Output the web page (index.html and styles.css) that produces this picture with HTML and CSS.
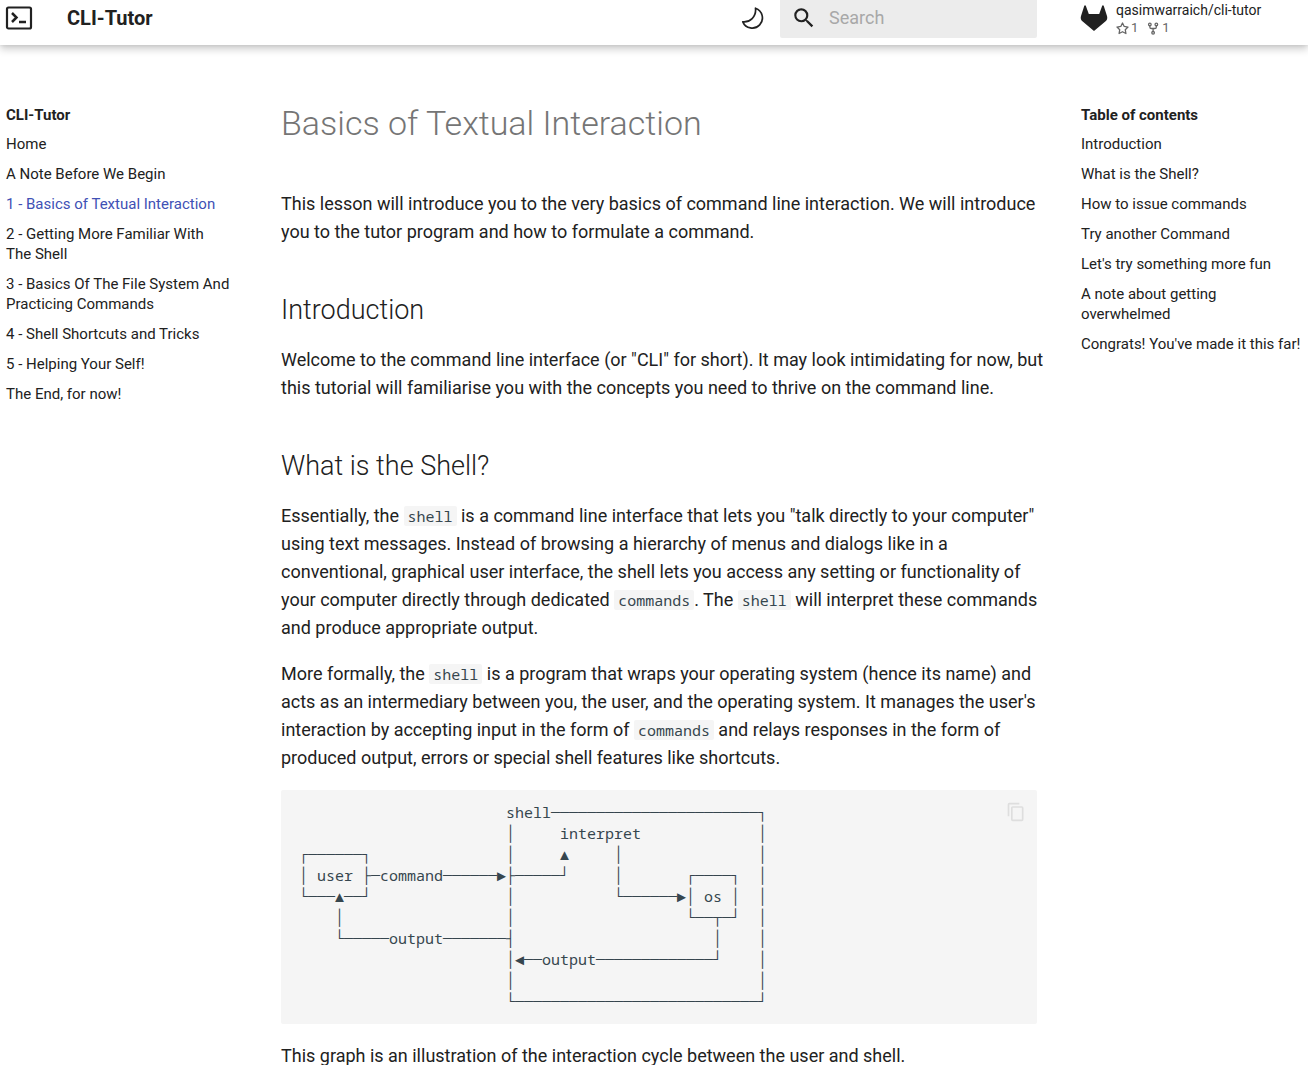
FILE: index.html
```html
<!DOCTYPE html>
<html lang="en">
<head>
<meta charset="utf-8">
<meta name="viewport" content="width=device-width, initial-scale=1">
<title>Basics of Textual Interaction - CLI-Tutor</title>
<link rel="stylesheet" href="styles.css">
</head>
<body>
<header class="header">
  <a class="logo" href="#" aria-label="CLI-Tutor home">
    <svg viewBox="0 0 28 26" width="28" height="26" fill="none" stroke="currentColor" stroke-width="2.200"><rect x="2" y="2.500" width="24" height="21" rx="1.500"/><path stroke-width="2.500" d="M7 8l4.500 4.500L7 17M14 17h7"/></svg>
  </a>
  <a class="site-title" href="#">CLI-Tutor</a>
  <button class="theme-toggle" type="button" aria-label="Switch theme">
    <svg viewBox="0 0 26 26" width="26" height="26" fill="none" stroke="currentColor" stroke-width="1.700" stroke-linejoin="round"><path d="M15.500 3.200A10.200 10.200 0 1 1 2.800 16.800C9.800 17.500 16.500 12 15.500 3.200z"/></svg>
  </button>
  <form class="search">
    <svg viewBox="0 0 24 24" width="26" height="26" fill="currentColor"><path d="M9.500 3A6.500 6.500 0 0 1 16 9.500c0 1.610-.59 3.090-1.560 4.230l.27.27h.79l5 5-1.500 1.500-5-5v-.79l-.27-.27A6.516 6.516 0 0 1 9.500 16 6.500 6.500 0 0 1 3 9.500 6.500 6.500 0 0 1 9.500 3m0 2C7 5 5 7 5 9.500S7 14 9.500 14 14 12 14 9.500 12 5 9.500 5z"/></svg>
    <input class="search-input" type="text" aria-label="Search" placeholder="Search">
  </form>
  <a class="repo" href="#">
    <svg class="repo-icon" viewBox="0 0 28 28" width="28" height="28" fill="currentColor"><path d="M5.800 1.800L8.800 10h10.400L22.200 1.800c.3-.8 1.200-.8 1.500 0L27 12c.6 2 .2 4-1.400 5.300L14 27 2.400 17.300C.8 16 .4 14 1 12L4.300 1.800c.3-.8 1.200-.8 1.500 0z"/></svg>
    <span class="repo-text">
      <span class="repo-name">qasimwarraich/cli-tutor</span>
      <span class="repo-facts">
        <span class="fact"><svg viewBox="0 0 16 16" width="13" height="13" fill="none" stroke="currentColor" stroke-width="1.600" stroke-linejoin="round"><path d="M8 1.200l2.100 4.300 4.700.7-3.400 3.300.8 4.700L8 12l-4.200 2.200.8-4.700L1.200 6.200l4.700-.7z"/></svg>1</span>
        <span class="fact"><svg viewBox="0 0 16 16" width="13" height="13" fill="none" stroke="currentColor" stroke-width="1.600"><circle cx="3.500" cy="3" r="1.600"/><circle cx="11.500" cy="3" r="1.600"/><circle cx="7.500" cy="13.300" r="1.600"/><path d="M3.500 4.600V6q0 2 2 2h4q2 0 2-2V4.600M7.500 8v3.700"/></svg>1</span>
      </span>
    </span>
  </a>
</header>
<div class="layout">
  <nav class="nav" aria-label="Lessons">
    <a class="nav-title" href="#">CLI-Tutor</a>
    <ul class="nav-list">
      <li><a href="#">Home</a></li>
      <li><a href="#">A Note Before We Begin</a></li>
      <li><a class="active" href="#">1 - Basics of Textual Interaction</a></li>
      <li><a href="#">2 - Getting More Familiar With The Shell</a></li>
      <li><a href="#">3 - Basics Of The File System And Practicing Commands</a></li>
      <li><a href="#">4 - Shell Shortcuts and Tricks</a></li>
      <li><a href="#">5 - Helping Your Self!</a></li>
      <li><a href="#">The End, for now!</a></li>
    </ul>
  </nav>
  <main class="content">
    <h1>Basics of Textual Interaction</h1>
    <p>This lesson will introduce you to the very basics of command line interaction. We will introduce you to the tutor program and how to formulate a command.</p>
    <h2 id="introduction">Introduction</h2>
    <p>Welcome to the command line interface (or "CLI" for short). It may look intimidating for now, but this tutorial will familiarise you with the concepts you need to thrive on the command line.</p>
    <h2 id="shell">What is the Shell?</h2>
    <p>Essentially, the <code>shell</code> is a command line interface that lets you "talk directly to your computer" using text messages. Instead of browsing a hierarchy of menus and dialogs like in a conventional, graphical user interface, the shell lets you access any setting or functionality of your computer directly through dedicated <code>commands</code>. The <code>shell</code> will interpret these commands and produce appropriate output.</p>
    <p>More formally, the <code>shell</code> is a program that wraps your operating system (hence its name) and acts as an intermediary between you, the user, and the operating system. It manages the user's interaction by accepting input in the form of <code>commands</code> and relays responses in the form of produced output, errors or special shell features like shortcuts.</p>
    <div class="diagram">
<pre>                       shell───────────────────────┐
                       │     interpret             │
┌──────┐               │     ▲     │               │
│ user ├─command──────►├─────┘     │       ┌────┐  │
└───▲──┘               │           └──────►│ os │  │
    │                  │                   └──┬─┘  │
    └─────output───────┤                      │    │
                       │◄──output─────────────┘    │
                       │                           │
                       └───────────────────────────┘</pre>
      <button class="copy" type="button" aria-label="Copy to clipboard"><svg viewBox="0 0 24 24" width="20" height="20" fill="currentColor"><path d="M19 21H8V7h11m0-2H8a2 2 0 0 0-2 2v14a2 2 0 0 0 2 2h11a2 2 0 0 0 2-2V7a2 2 0 0 0-2-2m-3-4H4a2 2 0 0 0-2 2v14h2V3h12V1z"/></svg></button>
    </div>
    <p>This graph is an illustration of the interaction cycle between the user and shell.</p>
  </main>
  <nav class="nav toc" aria-label="Table of contents">
    <span class="nav-title">Table of contents</span>
    <ul class="nav-list">
      <li><a href="#introduction">Introduction</a></li>
      <li><a href="#shell">What is the Shell?</a></li>
      <li><a href="#">How to issue commands</a></li>
      <li><a href="#">Try another Command</a></li>
      <li><a href="#">Let's try something more fun</a></li>
      <li><a href="#">A note about getting overwhelmed</a></li>
      <li><a href="#">Congrats! You've made it this far!</a></li>
    </ul>
  </nav>
</div>
</body>
</html>
```
FILE: styles.css
```css
* { box-sizing: border-box; }
body {
  margin: 0;
  background: #fff;
  color: #212121;
  font-family: Roboto, "Liberation Sans", sans-serif;
  font-size: 18px;
  line-height: 28px;
}
a { color: inherit; text-decoration: none; }
svg { display: block; flex: none; }
button { border: 0; padding: 0; background: none; color: inherit; }

.header {
  display: flex;
  align-items: center;
  height: 45px;
  padding: 0 0 9px 5px;
  box-shadow: 0 0 4px rgba(0, 0, 0, .1), 0 4px 8px rgba(0, 0, 0, .2);
}
.site-title { margin-left: 34px; font-size: 20px; font-weight: 700; }
.theme-toggle { margin-left: auto; margin-right: 14px; }
.search {
  display: flex;
  align-self: flex-start;
  align-items: center;
  gap: 12px;
  width: 257px;
  height: 38px;
  padding: 0 0 2px 11px;
  border-radius: 0 0 2px 2px;
  background: #ececec;
}
.search-input {
  flex: 1;
  min-width: 0;
  border: 0;
  padding: 0;
  background: none;
  font: inherit;
}
.search-input::placeholder { color: #a8a8a8; }
.repo { display: flex; align-items: center; gap: 8px; width: 228px; margin-left: 43px; }
.repo-text { display: flex; flex-direction: column; padding-top: 2px; }
.repo-name { font-size: 14px; line-height: 18px; }
.repo-facts { display: flex; gap: 9px; color: #666; font-size: 13px; line-height: 18px; }
.fact { display: flex; align-items: center; gap: 2px; }

.layout {
  display: grid;
  grid-template-columns: 237px minmax(0, 1fr) 227px;
  gap: 44px;
  padding-top: 60px;
}
.nav { padding: 0 6px; font-size: 15px; line-height: 20px; }
.toc { padding: 0; }
.nav-title { display: block; margin-bottom: 9px; font-weight: 700; }
.nav-list {
  display: flex;
  flex-direction: column;
  gap: 10px;
  margin: 0;
  padding: 0;
  list-style: none;
}
.nav-list a { display: block; }
.active { color: #4051b5; }

/* Paragraphs may run slightly into the gutter beside the table of contents. */
.content p { margin: 0 -8px 18px 0; }
h1 {
  margin: 0 0 48px;
  color: #757575;
  font-size: 34px;
  font-weight: 300;
  line-height: 37px;
}
h2 {
  margin: 45px 0 17px;
  font-size: 27px;
  font-weight: 300;
  line-height: 38px;
}
code, pre {
  color: #36464e;
  font-family: "Noto Sans Mono", "DejaVu Sans Mono", "Liberation Mono", monospace;
  font-size: 15px;
}
code { padding: 0 4px; border-radius: 2px; background: #f5f5f5; }
.diagram { position: relative; margin-bottom: 18px; border-radius: 2px; background: #f5f5f5; }
pre { margin: 0; padding: 12px 18px; line-height: 21px; overflow: auto; }
.copy { position: absolute; top: 12px; right: 11px; color: #dedede; }
```
